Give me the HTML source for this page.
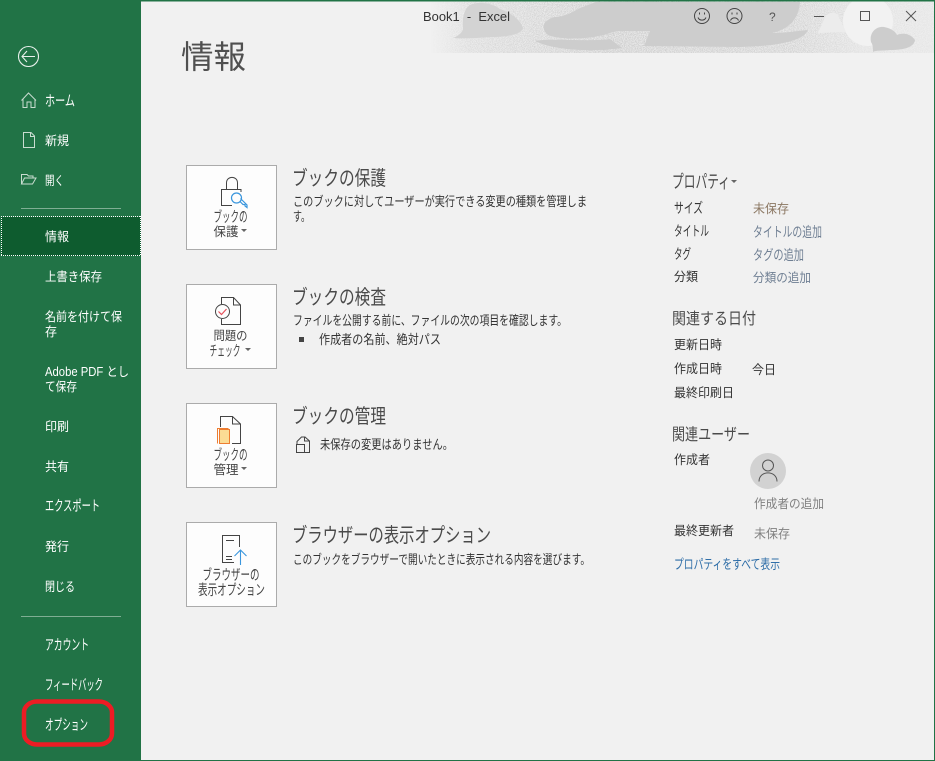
<!DOCTYPE html>
<html lang="ja"><head><meta charset="utf-8"><title>Book1 - Excel</title>
<style>
html,body{margin:0;padding:0;width:935px;height:761px;overflow:hidden;background:#f1f1f1}
svg{display:block}
text{font-family:"Liberation Sans","Noto Sans CJK JP",sans-serif;font-weight:400}
.s text{fill:#fff;font-size:12.500px}
.s .k{font-size:14.500px}
.d text{fill:#333;font-size:12.500px}
.d .k{font-size:14px}
.h text{fill:#4a4a4a;font-size:19px}
.c text{fill:#444;font-size:12.500px;text-anchor:middle}
.c .k{font-size:14.500px}
</style></head><body>
<svg width="935" height="761" viewBox="0 0 935 761" xmlns="http://www.w3.org/2000/svg">
<defs>
<filter id="n" x="0" y="0" width="100%" height="100%" color-interpolation-filters="sRGB"><feTurbulence type="fractalNoise" baseFrequency="1.1" numOctaves="2" seed="4"/><feColorMatrix values="0 0 0 0 .80 0 0 0 0 .80 0 0 0 0 .80 3 0 0 0 -1.050"/></filter>
<linearGradient id="f" x1="0" x2="1" y1="0" y2="0"><stop offset="0" stop-color="#000"/><stop offset=".08" stop-color="#999"/><stop offset=".35" stop-color="#fff"/><stop offset=".72" stop-color="#ddd"/><stop offset=".86" stop-color="#666"/><stop offset="1" stop-color="#555"/></linearGradient>
<mask id="m" maskUnits="userSpaceOnUse" x="430" y="0" width="505" height="53"><rect x="430" y="0" width="505" height="53" fill="url(#f)"/></mask>
</defs>
<rect width="935" height="761" fill="#f1f1f1"/>
<g mask="url(#m)"><rect x="430" y="1" width="505" height="52" fill="#e9e9e9"/><rect x="430" y="1" width="505" height="52" filter="url(#n)"/></g>
<circle cx="868" cy="21" r="25" fill="#f2f2f2"/>
<path d="M823 22C825 13 834 10 838 15L846 32L818 33Z" fill="#ececec"/>
<rect x="430" y="53" width="505" height="8" fill="#f1f1f1"/>
<g fill="#d3d3d3">
<path d="M470 5C478 1 492 3 500 9C512 13 522 22 523 28C522 34 508 37 490 37C478 38 464 39 453 38C458 36 462 33 463 29C462 18 464 9 470 5Z"/>
</g>
<g fill="#cdcdcd">
<path d="M596 2H800C799 18 790 29 772 33C785 33 797 31 808 30C803 42 775 46 740 47L644 46L650 31H617L610 33C590 40 560 40 548 35C540 28 543 20 555 17C565 17 572 12 580 8Z"/>
<path d="M535 41C550 38 590 42 610 39L622 48C595 52 555 51 535 41Z"/>
<path d="M871 42C869 33 876 26 884 27C890 28 895 31 897 35C903 32 911 34 915 40C914 47 905 50 890 50C882 51 876 50 873 52C873 48 873 45 871 42Z"/>
</g>

<rect x="0" y="0" width="935" height="1.500" fill="#217346"/>
<rect x="934" y="0" width="1" height="761" fill="#217346"/>
<rect x="0" y="760" width="935" height="1" fill="#217346"/>
<rect x="0" y="0" width="141" height="761" fill="#217346"/>

<rect x="1" y="217" width="140" height="39" fill="#0e5c2f"/>
<g fill="none" stroke="#fff" stroke-width="1" stroke-dasharray="1 1" shape-rendering="crispEdges">
<path d="M1 216.500H141M1 255.500H141M1.500 216V256M140.500 216V256"/>
</g>
<rect x="21" y="208" width="100" height="1" fill="#7fae93"/>
<rect x="21" y="616" width="100" height="1" fill="#7fae93"/>

<g fill="none" stroke="#e8f0eb" stroke-width="1.100">
<circle cx="28.500" cy="56.500" r="10"/>
<path d="M35 56.500H22M27 51L22 56.500L27 62"/>
</g>
<g fill="none" stroke="#c9dcd0" stroke-width="1">
<path d="M21.500 100.500L28.500 93L36 100.500M23 99V107.500H27V102H31V107.500H35V99"/>
<path d="M23.500 132.500H31L34.500 136V147.500H23.500ZM30.500 132.500V136.500H34.500"/>
<path d="M21.500 184V174.500H27L28.500 176H33V178M21.500 184H32.500L36 178H24.500L21.500 184Z"/>
</g>

<g class="s">
<text class="k" x="45" y="106" textLength="30" lengthAdjust="spacingAndGlyphs">ホーム</text>
<text x="45" y="145" textLength="24" lengthAdjust="spacingAndGlyphs">新規</text>
<text x="45" y="185" textLength="19" lengthAdjust="spacingAndGlyphs">開く</text>
<text x="45" y="241" textLength="24" lengthAdjust="spacingAndGlyphs">情報</text>
<text x="45" y="281" textLength="57" lengthAdjust="spacingAndGlyphs">上書き保存</text>
<text x="45" y="321" textLength="77" lengthAdjust="spacingAndGlyphs">名前を付けて保</text>
<text x="45" y="336" textLength="12" lengthAdjust="spacingAndGlyphs">存</text>
<text x="45" y="376" textLength="84" lengthAdjust="spacingAndGlyphs">Adobe PDF とし</text>
<text x="45" y="391" textLength="32" lengthAdjust="spacingAndGlyphs">て保存</text>
<text x="45" y="431" textLength="24" lengthAdjust="spacingAndGlyphs">印刷</text>
<text x="45" y="471" textLength="24" lengthAdjust="spacingAndGlyphs">共有</text>
<text class="k" x="45" y="511" textLength="55" lengthAdjust="spacingAndGlyphs">エクスポート</text>
<text x="45" y="551" textLength="24" lengthAdjust="spacingAndGlyphs">発行</text>
<text x="45" y="591" textLength="30" lengthAdjust="spacingAndGlyphs">閉じる</text>
<text class="k" x="45" y="650" textLength="44" lengthAdjust="spacingAndGlyphs">アカウント</text>
<text class="k" x="45" y="690" textLength="58" lengthAdjust="spacingAndGlyphs">フィードバック</text>
<text class="k" x="45" y="730" textLength="43" lengthAdjust="spacingAndGlyphs">オプション</text>
</g>
<rect x="24" y="701.500" width="88" height="43" rx="13" ry="11" fill="none" stroke="#ed1c24" stroke-width="4.500"/>

<text x="423" y="21" font-size="12.500" fill="#333" textLength="87" lengthAdjust="spacingAndGlyphs" xml:space="preserve">Book1  -  Excel</text>
<text x="181" y="68" font-size="32" fill="#505050" textLength="65" lengthAdjust="spacingAndGlyphs">情報</text>

<g fill="none" stroke="#444" stroke-width="1">
<circle cx="702" cy="16" r="7.500"/><circle cx="734.500" cy="16" r="7.500"/>
<path d="M698 17.500C699.500 21 704.500 21 706 17.500M730.500 20.500C732 17 737 17 738.500 20.500"/>
<path d="M699.500 12.500V14.500M704.500 12.500V14.500M732 12.500V14.500M737 12.500V14.500"/>
<path d="M814 16.500H824" stroke="#555"/>
<rect x="860.500" y="11.500" width="9" height="9" stroke="#555"/>
<path d="M906 11L916 21M916 11L906 21" stroke="#555"/>
</g>
<text x="769" y="21" font-size="12" fill="#555">?</text>

<g fill="#fdfdfd" stroke="#ababab">
<rect x="186.500" y="165.500" width="90" height="84"/>
<rect x="186.500" y="284.500" width="90" height="84"/>
<rect x="186.500" y="403.500" width="90" height="84"/>
<rect x="186.500" y="522.500" width="90" height="84"/>
</g>

<!-- lock -->
<g fill="none" stroke="#444"><path d="M226.500 189.500V183C226.500 175.500 237.500 175.500 237.500 183V189.500"/><path d="M232 205.500H221.500V189.500H241V192"/></g>
<g fill="none" stroke="#3a96dd" stroke-width="1.200"><circle cx="236.500" cy="198" r="5"/><path d="M240 201.500L243 204.500H245V206L247 207.500V205L240.500 198.500"/></g>
<!-- check -->
<g fill="none" stroke="#444"><path d="M221.500 304V297.500H233.500L240.500 305V324.500H221.500V319"/><path d="M233.500 297.500V305H240.500"/><circle cx="222.500" cy="311.500" r="7"/></g>
<path d="M218.500 311.500L221.500 314.500L226.500 309" fill="none" stroke="#e8505b" stroke-width="1.200"/>
<!-- manage -->
<g fill="none" stroke="#444"><path d="M220.500 427V416.500H232.500L240.500 424V443.500H232"/><path d="M232.500 416.500V424H240.500"/></g>
<path d="M217.500 443.500V428.500H228.500" fill="none" stroke="#ed7d31"/>
<rect x="219.500" y="429.500" width="10" height="14" fill="#fbdc94" stroke="#ed7d31"/>
<!-- browser -->
<g fill="none" stroke="#444"><path d="M239.500 547V535.500H222.500V562.500H234"/><path d="M226 540.500H234M226 556.500H232M226 559.500H232"/></g>
<path d="M240.500 565V550M234.500 556L240.500 550L246.500 556" fill="none" stroke="#3a96dd" stroke-width="1.100"/>

<g class="c">
<text class="k" x="230.500" y="222" textLength="34" lengthAdjust="spacingAndGlyphs">ブックの</text>
<text x="226" y="236" textLength="25" lengthAdjust="spacingAndGlyphs">保護</text>
<text x="230.500" y="340" textLength="34" lengthAdjust="spacingAndGlyphs">問題の</text>
<text class="k" x="225" y="356" textLength="31" lengthAdjust="spacingAndGlyphs">チェック</text>
<text class="k" x="230.500" y="460" textLength="34" lengthAdjust="spacingAndGlyphs">ブックの</text>
<text x="226" y="474" textLength="25" lengthAdjust="spacingAndGlyphs">管理</text>
<text class="k" x="231" y="580" textLength="57" lengthAdjust="spacingAndGlyphs">ブラウザーの</text>
<text class="k" x="231.500" y="595" textLength="67" lengthAdjust="spacingAndGlyphs">表示オプション</text>
</g>
<g fill="#666"><path d="M241 229H247L244 232ZM245 348H251L248 351ZM241 467H247L244 470ZM731 180H737L734 183Z"/></g>

<g class="h">
<text x="292" y="185" style="font-size:20px" textLength="94" lengthAdjust="spacingAndGlyphs">ブックの保護</text>
<text x="292" y="304" style="font-size:20px" textLength="94" lengthAdjust="spacingAndGlyphs">ブックの検査</text>
<text x="292" y="423" style="font-size:20px" textLength="94" lengthAdjust="spacingAndGlyphs">ブックの管理</text>
<text x="292" y="542" style="font-size:20px" textLength="199" lengthAdjust="spacingAndGlyphs">ブラウザーの表示オプション</text>
<text x="672" y="188" style="font-size:18px" textLength="58" lengthAdjust="spacingAndGlyphs">プロパティ</text>
<text x="672" y="324" style="font-size:16px" textLength="84" lengthAdjust="spacingAndGlyphs">関連する日付</text>
<text x="672" y="440" style="font-size:16.500px" textLength="78" lengthAdjust="spacingAndGlyphs">関連ユーザー</text>
</g>

<g class="d">
<text x="293" y="206" style="font-size:13px" textLength="294" lengthAdjust="spacingAndGlyphs">このブックに対してユーザーが実行できる変更の種類を管理しま</text>
<text x="293" y="221" style="font-size:13px" textLength="17" lengthAdjust="spacingAndGlyphs">す。</text>
<text x="293" y="325" style="font-size:13px" textLength="274" lengthAdjust="spacingAndGlyphs">ファイルを公開する前に、ファイルの次の項目を確認します。</text>
<text x="319" y="344" style="font-size:13px" textLength="122" lengthAdjust="spacingAndGlyphs">作成者の名前、絶対パス</text>
<text x="320" y="449" style="font-size:13px" textLength="133" lengthAdjust="spacingAndGlyphs">未保存の変更はありません。</text>
<text x="293" y="564" style="font-size:13px" textLength="297" lengthAdjust="spacingAndGlyphs">このブックをブラウザーで開いたときに表示される内容を選びます。</text>
<text class="k" x="674" y="213" textLength="29" lengthAdjust="spacingAndGlyphs">サイズ</text>
<text class="k" x="674" y="236" textLength="35" lengthAdjust="spacingAndGlyphs">タイトル</text>
<text class="k" x="674" y="259" textLength="17" lengthAdjust="spacingAndGlyphs">タグ</text>
<text x="674" y="281" textLength="24" lengthAdjust="spacingAndGlyphs">分類</text>
<text x="674" y="349" textLength="48" lengthAdjust="spacingAndGlyphs">更新日時</text>
<text x="674" y="373" textLength="48" lengthAdjust="spacingAndGlyphs">作成日時</text>
<text x="752" y="374" textLength="24" lengthAdjust="spacingAndGlyphs">今日</text>
<text x="674" y="397" textLength="60" lengthAdjust="spacingAndGlyphs">最終印刷日</text>
<text x="674" y="464" textLength="36" lengthAdjust="spacingAndGlyphs">作成者</text>
<text x="674" y="535" textLength="60" lengthAdjust="spacingAndGlyphs">最終更新者</text>
</g>
<rect x="299" y="337" width="5" height="5" fill="#444"/>
<g fill="none" stroke="#444"><path d="M297 444V441.500L301.500 437H305L309.500 441V452.500H304.500"/><path d="M304.500 437V441H309.500"/><rect x="296.500" y="444.500" width="8" height="8"/></g>

<text x="753" y="213" font-size="12.500" fill="#8b7762" textLength="36" lengthAdjust="spacingAndGlyphs">未保存</text>
<g fill="#6f7f93">
<text x="753" y="237" font-size="14" textLength="69" lengthAdjust="spacingAndGlyphs">タイトルの追加</text>
<text x="753" y="260" font-size="14" textLength="51" lengthAdjust="spacingAndGlyphs">タグの追加</text>
<text x="753" y="282" font-size="12.500" textLength="58" lengthAdjust="spacingAndGlyphs">分類の追加</text>
</g>
<text x="754" y="508" font-size="12.500" fill="#808080" textLength="70" lengthAdjust="spacingAndGlyphs">作成者の追加</text>
<text x="754" y="538" font-size="12.500" fill="#808080" textLength="36" lengthAdjust="spacingAndGlyphs">未保存</text>
<text x="674" y="569" font-size="13.500" fill="#2f6ea8" textLength="106" lengthAdjust="spacingAndGlyphs">プロパティをすべて表示</text>

<circle cx="768" cy="471" r="18" fill="#d2d2d2"/>
<g fill="none" stroke="#555" stroke-width="1"><circle cx="768" cy="465.500" r="5.500"/><path d="M759 481.500C759 470 777 470 777 481.500"/></g>
</svg>
</body></html>
